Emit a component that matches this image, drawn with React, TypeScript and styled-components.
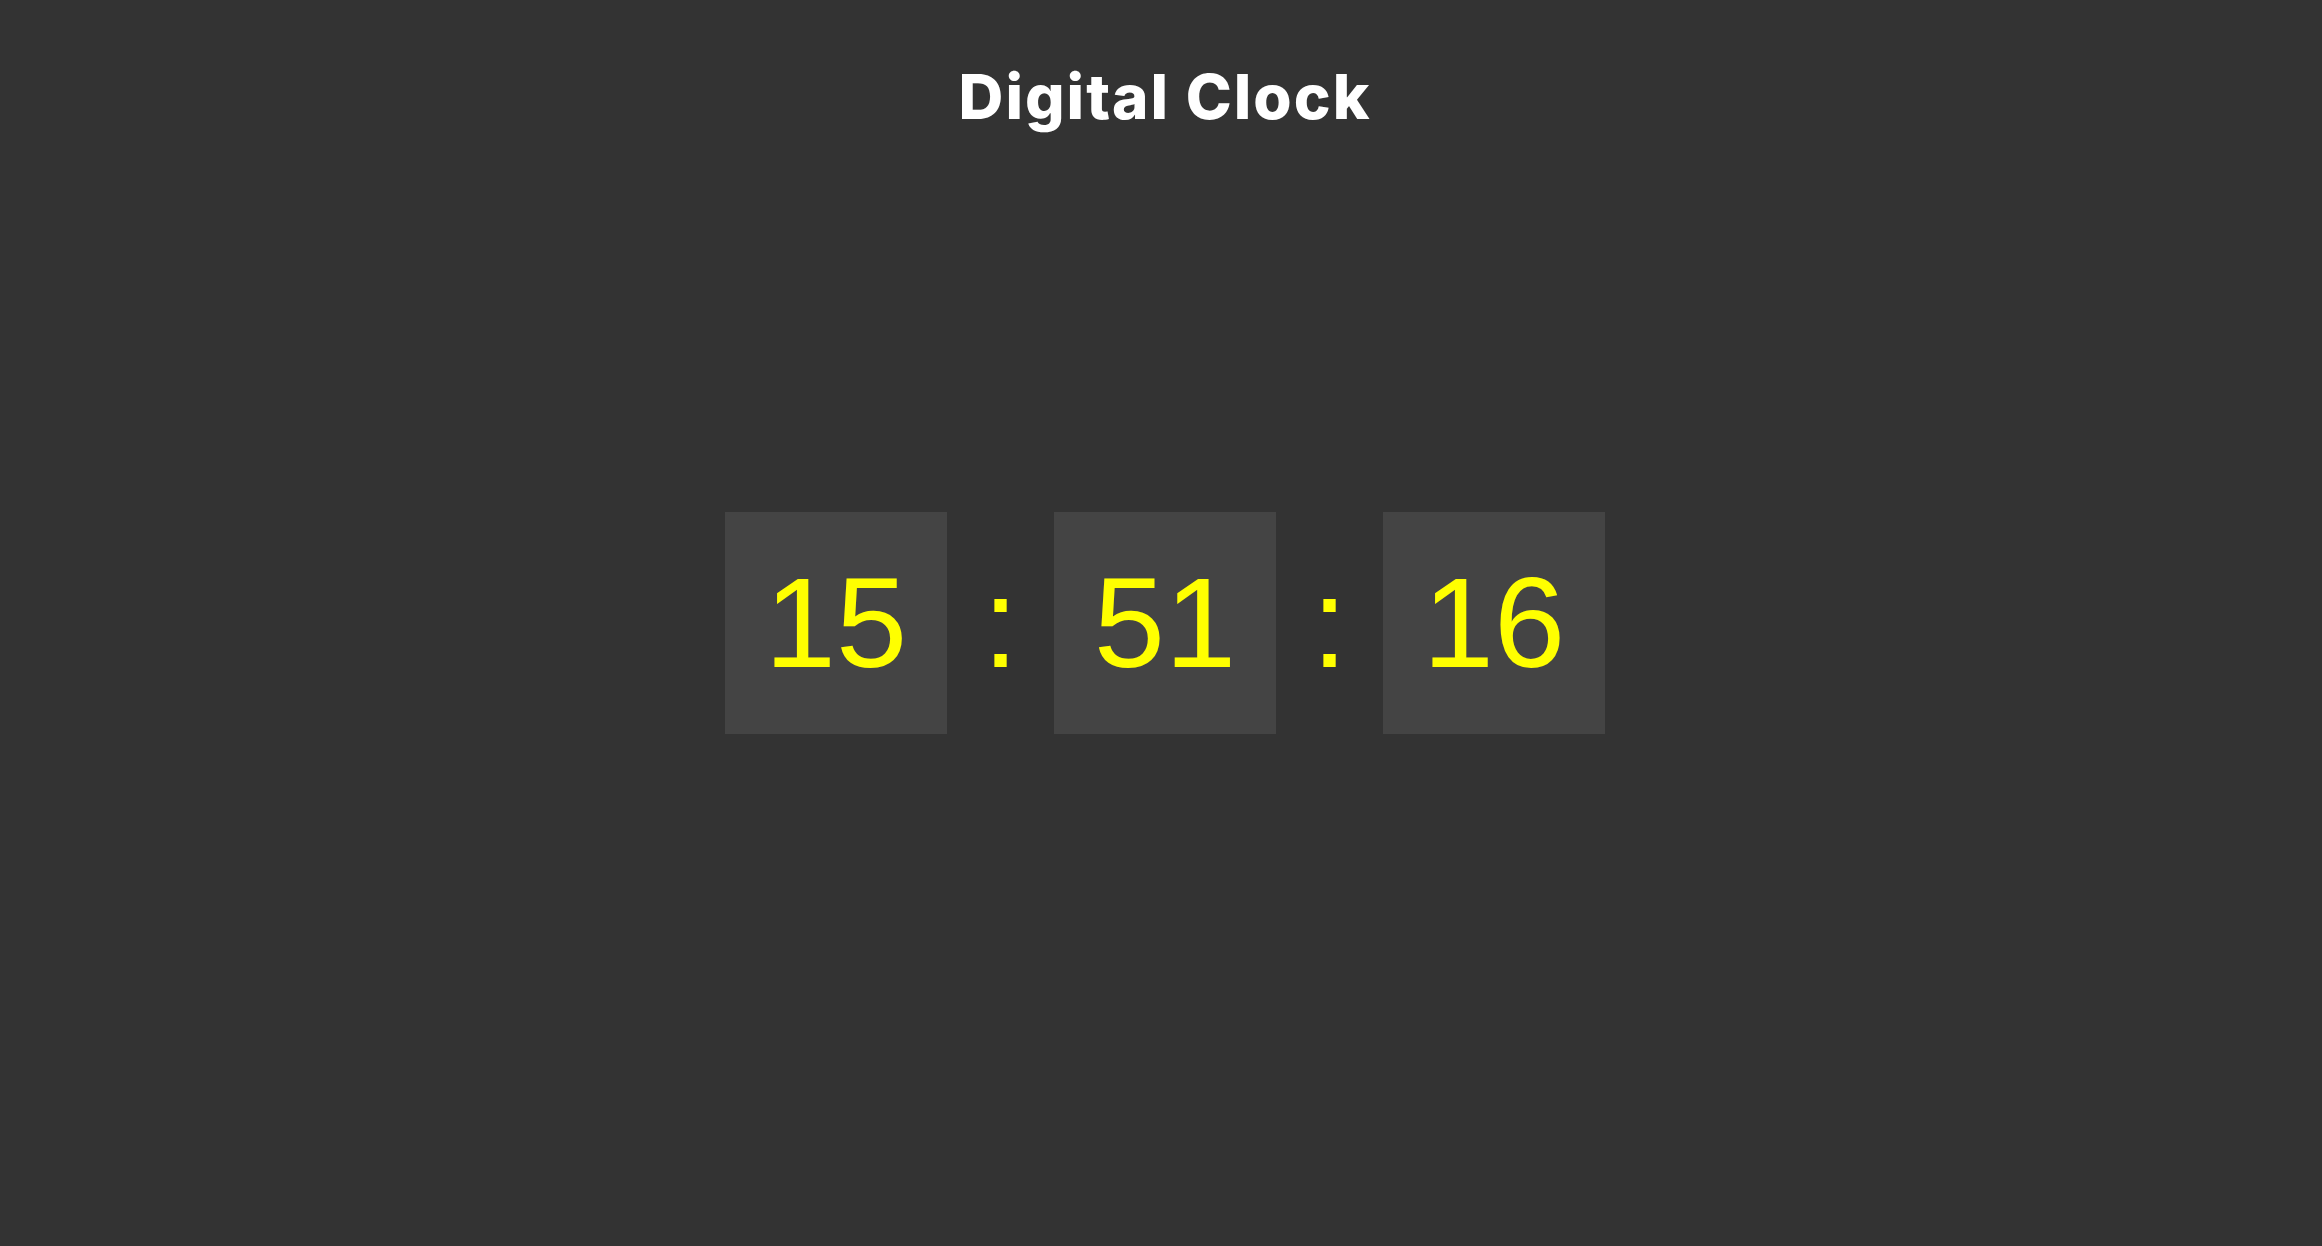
import React, { useState } from "react";
import styled, { createGlobalStyle } from "styled-components";

const GlobalStyle = createGlobalStyle`
  html, body {
    margin: 0;
    padding: 0;
    background: #333333;
  }
  * { box-sizing: border-box; }
`;

const Page = styled.main`
  height: 100vh;
  padding-left: 8px;
  display: grid;
  grid-template-rows: 1fr auto 1fr;
  justify-items: center;
  background: #333333;
`;

const Title = styled.h1`
  align-self: start;
  margin: 0;
  padding-top: 61px;
  font-family: Inter, "Liberation Sans", sans-serif;
  font-weight: 800;
  font-size: 62px;
  line-height: 72px;
  letter-spacing: 2px;
  color: #ffffff;
`;

const Clock = styled.div`
  display: flex;
  align-items: center;
`;

const Unit = styled.div`
  width: 222px;
  height: 222px;
  display: flex;
  align-items: center;
  justify-content: center;
  background: #444444;
  font-family: "Liberation Sans", Arial, sans-serif;
  font-size: 128px;
  line-height: 1;
  color: #ffff00;
`;

const Separator = styled.span`
  width: 107px;
  text-align: center;
  font-family: "Liberation Sans", Arial, sans-serif;
  font-size: 128px;
  line-height: 1;
  color: #ffff00;
`;

const pad = (n: number) => String(n).padStart(2, "0");

export default function App() {
  const [time] = useState({ h: 15, m: 51, s: 16 });
  return (
    <>
      <GlobalStyle />
      <Page>
        <Title>Digital Clock</Title>
        <Clock>
          <Unit>{pad(time.h)}</Unit>
          <Separator>:</Separator>
          <Unit>{pad(time.m)}</Unit>
          <Separator>:</Separator>
          <Unit>{pad(time.s)}</Unit>
        </Clock>
      </Page>
    </>
  );
}
